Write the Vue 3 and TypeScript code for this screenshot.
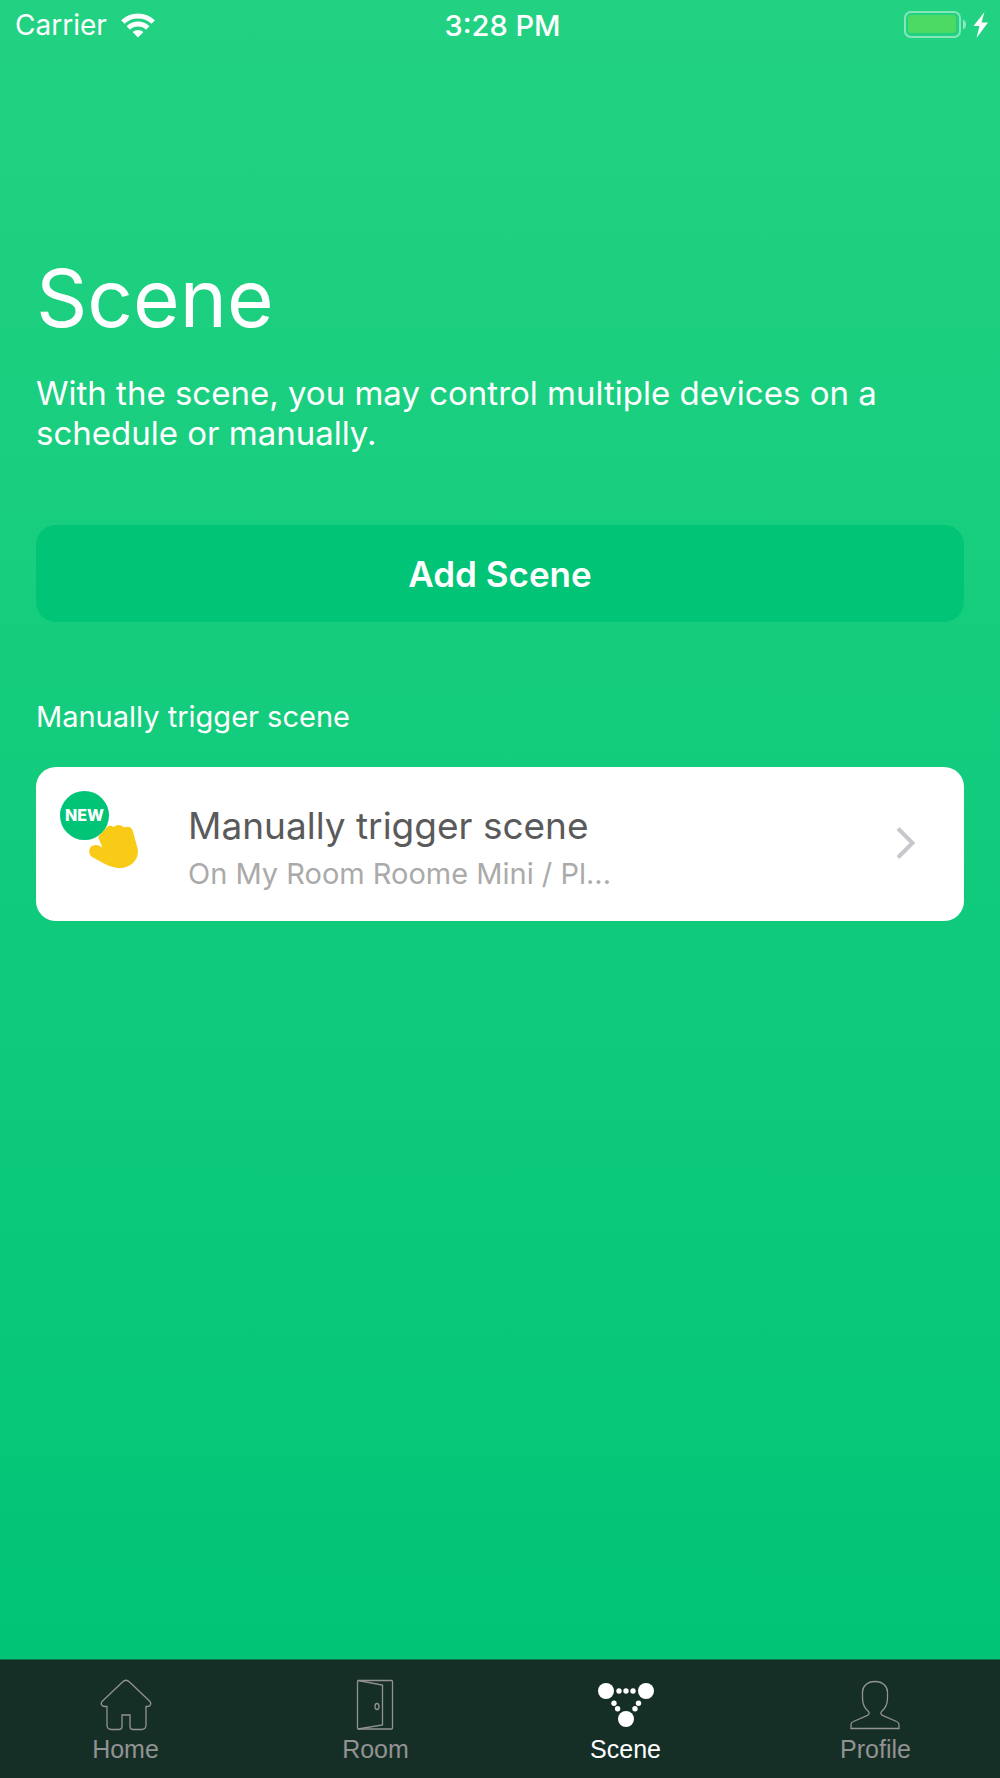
<script setup lang="ts">
interface Tab {
  id: 'home' | 'room' | 'scene' | 'profile'
  label: string
}

interface SceneItem {
  title: string
  detail: string
  isNew: boolean
}

const tabs: Tab[] = [
  { id: 'home', label: 'Home' },
  { id: 'room', label: 'Room' },
  { id: 'scene', label: 'Scene' },
  { id: 'profile', label: 'Profile' },
]
const activeTab = 'scene'

const scenes: SceneItem[] = [
  { title: 'Manually trigger scene', detail: 'On My Room Roome Mini / Pl...', isNew: true },
]
</script>

<template>
  <div class="screen">
    <header class="status">
      <div class="status-left">
        <span>Carrier</span>
        <svg class="wifi" width="34" height="25" viewBox="0 0 34 25" aria-hidden="true">
          <g fill="none" stroke="#fff" stroke-width="5">
            <path d="M1.800 9A22 22 0 0 1 32.200 9" />
            <path d="M7.300 15A14 14 0 0 1 26.700 15" />
          </g>
          <path d="M17 24.500L11.600 19A8 8 0 0 1 22.400 19Z" fill="#fff" />
        </svg>
      </div>
      <time class="clock">3:28 PM</time>
      <svg class="battery" width="86" height="28" viewBox="0 0 86 28" aria-hidden="true">
        <rect x="1" y="1" width="55" height="25" rx="6" fill="none" stroke="#fff" stroke-opacity=".45" stroke-width="2" />
        <rect x="4" y="4" width="48" height="18" rx="3" fill="#4cd964" />
        <path d="M59 8.500Q62 10 62 13.500T59 18.500Z" fill="#fff" fill-opacity=".5" />
        <path d="M80.500 1L69.500 15H75.500L72.500 27L84 11.500H77.500Z" fill="#fff" />
      </svg>
    </header>

    <main class="content">
      <h1>Scene</h1>
      <p class="intro">With the scene, you may control multiple devices on a schedule or manually.</p>
      <button type="button" class="add">Add Scene</button>

      <h2>Manually trigger scene</h2>
      <a v-for="scene in scenes" :key="scene.title" href="#" class="card">
        <span class="icon">
          <svg class="hand" width="50" height="44" viewBox="0 0 50 44" aria-hidden="true">
            <path
              d="M9 12L18 2Q21-.5 24.500 2Q30-2 35 2.500Q41 0 43.500 5L48.500 23C51 34 42 43 31 43C25 43 20 41 16 39L4 32.500C-1 30 -1 22 4 20.500C8 19 11 21 13.500 22.500Z"
              fill="#f8cb17"
            />
          </svg>
          <span v-if="scene.isNew" class="badge">NEW</span>
        </span>
        <span class="text">
          <span class="title">{{ scene.title }}</span>
          <span class="detail">{{ scene.detail }}</span>
        </span>
        <svg class="chevron" width="20" height="32" viewBox="0 0 20 32" aria-hidden="true">
          <path d="M2 1.500L16.500 16L2 30.500" fill="none" stroke="#c7c7cc" stroke-width="4" />
        </svg>
      </a>
    </main>

    <nav class="tabs">
      <a v-for="tab in tabs" :key="tab.id" href="#" class="tab" :class="{ active: tab.id === activeTab }">
        <svg v-if="tab.id === 'home'" width="52" height="52" viewBox="0 0 52 52" aria-hidden="true">
          <path
            d="M22.500 3Q26-.5 29.500 3L49.500 22C52 24.500 50.500 27.500 47 27.500H46V46Q46 50.500 41.500 50.500H33Q30 50.500 30 47.500V36H22V47.500Q22 50.500 19 50.500H11.500Q7 50.500 7 46V27.500H5C1.500 27.500 0 24.500 2.500 22Z"
          />
        </svg>
        <svg v-else-if="tab.id === 'room'" width="52" height="52" viewBox="0 0 52 52" aria-hidden="true">
          <rect x="7.500" y="1.500" width="35" height="48.500" rx="1" />
          <path d="M8 1.500L32.500 6V46L8 50" />
          <ellipse cx="27" cy="27.500" rx="2" ry="3" />
        </svg>
        <svg v-else-if="tab.id === 'scene'" class="solid" width="60" height="52" viewBox="0 0 60 52" aria-hidden="true">
          <circle cx="10" cy="12" r="8" />
          <circle cx="50" cy="12" r="8" />
          <circle cx="30" cy="40" r="8" />
          <circle cx="23" cy="12" r="2.700" />
          <circle cx="30" cy="12" r="2.700" />
          <circle cx="37" cy="12" r="2.700" />
          <circle cx="18" cy="24.300" r="2.700" />
          <circle cx="21.600" cy="29.700" r="2.700" />
          <circle cx="42.500" cy="24.300" r="2.700" />
          <circle cx="39" cy="29.700" r="2.700" />
        </svg>
        <svg v-else width="52" height="52" viewBox="0 0 52 52" aria-hidden="true">
          <path
            d="M25 2.500C33 2.500 37.500 7.500 37.500 13V19C37.500 25 35 29.500 32 32C30.300 33.600 30.500 35.300 32.500 36.300L46.500 42.500Q49 43.500 49 45.500V49.500H1V45.500Q1 43.500 3.500 42.500L17.500 36.300C19.500 35.300 19.700 33.600 18 32C15 29.500 12.500 25 12.500 19V13C12.500 7.500 17 2.500 25 2.500Z"
          />
        </svg>
        <span>{{ tab.label }}</span>
      </a>
    </nav>
  </div>
</template>

<style>
body {
  margin: 0;
}
</style>

<style scoped>
.screen {
  display: flex;
  flex-direction: column;
  min-height: 100vh;
  background: linear-gradient(#22d282, #01c476 96%);
  color: #fff;
  font-family: Inter, "Liberation Sans", sans-serif;
}

.status {
  display: grid;
  grid-template-columns: 1fr auto 1fr;
  align-items: center;
  height: 50px;
  padding: 0 10px 0 15px;
  font-size: 28px;
}

.status-left {
  display: flex;
  align-items: center;
  gap: 14px;
}

.clock {
  font-size: 29px;
  font-weight: 500;
}

.battery {
  justify-self: end;
}

.content {
  flex: 1;
  padding: 196px 36px 40px;
}

h1 {
  margin: 0;
  font-size: 80px;
  line-height: 104px;
  font-weight: 400;
}

.intro {
  margin: 23px 0 0;
  font-size: 33px;
  line-height: 40px;
}

.add {
  display: block;
  width: 100%;
  height: 97px;
  margin: 72px 0 0;
  border: 0;
  border-radius: 20px;
  background: #01c476;
  color: #fff;
  font: 600 35px/44px Inter, "Liberation Sans", sans-serif;
}

h2 {
  margin: 75px 0 0;
  font-size: 29px;
  line-height: 40px;
  font-weight: 400;
}

.card {
  display: flex;
  align-items: center;
  box-sizing: border-box;
  height: 154px;
  margin-top: 30px;
  padding: 0 48px 2px 24px;
  border-radius: 20px;
  background: #fff;
  text-decoration: none;
}

.icon {
  position: relative;
  width: 80px;
  height: 104px;
  margin-right: 48px;
}

.hand {
  position: absolute;
  left: 29px;
  top: 34px;
}

.badge {
  position: absolute;
  left: 0;
  top: 0;
  width: 49px;
  height: 49px;
  border-radius: 50%;
  background: #01c476;
  color: #fff;
  font-size: 16px;
  line-height: 49px;
  font-weight: 800;
  text-align: center;
}

.text {
  flex: 1;
  display: flex;
  flex-direction: column;
  gap: 6px;
  padding-top: 12px;
}

.title {
  color: #5a5a5a;
  font-size: 37px;
  line-height: 44px;
}

.detail {
  color: #aaa;
  font-size: 29px;
  line-height: 40px;
}

.tabs {
  display: flex;
  box-sizing: border-box;
  height: 119px;
  border-top: 1px solid #0c7448;
  background: #162f26;
}

.tab {
  flex: 1;
  display: flex;
  flex-direction: column;
  align-items: center;
  padding: 19px 0 0 1px;
  color: #929292;
  font-family: "Liberation Sans", Arial, sans-serif;
  font-size: 25px;
  line-height: 36px;
  text-decoration: none;
}

.tab svg {
  fill: none;
  stroke: #929292;
  stroke-width: 1.3;
}

.tab .solid {
  fill: #fff;
  stroke: none;
}

.active {
  color: #fff;
}
</style>
